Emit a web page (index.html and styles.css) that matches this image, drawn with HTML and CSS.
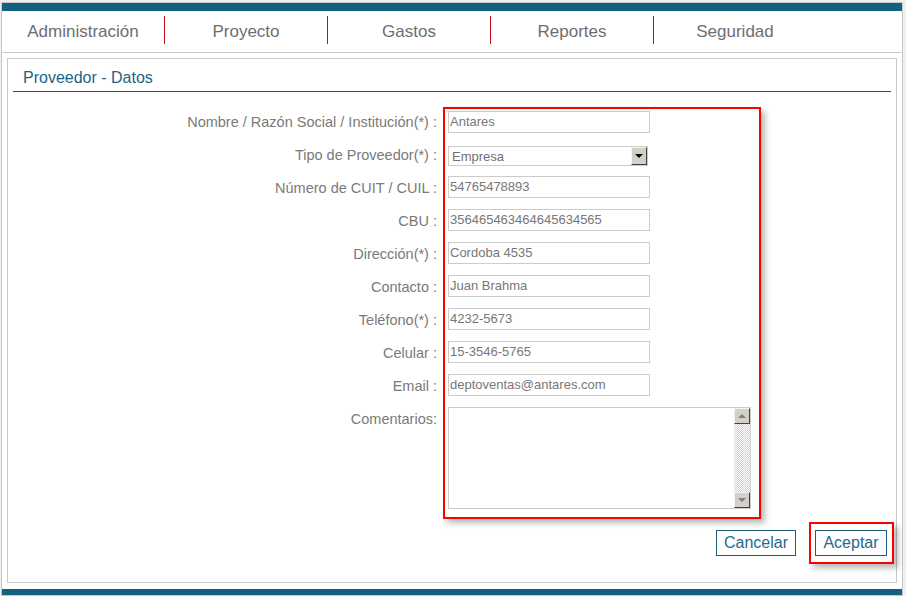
FILE: index.html
```html
<!DOCTYPE html>
<html lang="es">
<head>
<meta charset="utf-8">
<title>Proveedor - Datos</title>
<link rel="stylesheet" href="styles.css">
</head>
<body>
<div class="page">
  <div class="topbar"></div>
  <nav class="nav">
    <div class="tab sep">Administración</div>
    <div class="tab sep">Proyecto</div>
    <div class="tab sep">Gastos</div>
    <div class="tab sep">Reportes</div>
    <div class="tab">Seguridad</div>
  </nav>
  <div class="panel">
    <div class="panel-title">Proveedor - Datos</div>
    <div class="form">
      <div class="labels">
        <div class="lbl">Nombre / Razón Social / Institución(*) :</div>
        <div class="lbl">Tipo de Proveedor(*) :</div>
        <div class="lbl">Número de CUIT / CUIL :</div>
        <div class="lbl">CBU :</div>
        <div class="lbl">Dirección(*) :</div>
        <div class="lbl">Contacto :</div>
        <div class="lbl">Teléfono(*) :</div>
        <div class="lbl">Celular :</div>
        <div class="lbl">Email :</div>
        <div class="lbl lbl-top">Comentarios:</div>
      </div>
      <div class="fields">
        <div class="row"><div class="input">Antares</div></div>
        <div class="row"><div class="select"><span class="select-text">Empresa</span><span class="select-btn"><span class="tri-down"></span></span></div></div>
        <div class="row"><div class="input">54765478893</div></div>
        <div class="row"><div class="input">356465463464645634565</div></div>
        <div class="row"><div class="input">Cordoba 4535</div></div>
        <div class="row"><div class="input">Juan Brahma</div></div>
        <div class="row"><div class="input">4232-5673</div></div>
        <div class="row"><div class="input">15-3546-5765</div></div>
        <div class="row"><div class="input">deptoventas@antares.com</div></div>
        <div class="row-ta">
          <div class="textarea">
            <div class="ta-body"></div>
            <div class="scrollbar">
              <div class="sb-btn"><span class="tri-up"></span></div>
              <div class="sb-track"></div>
              <div class="sb-btn"><span class="tri-down gray"></span></div>
            </div>
          </div>
        </div>
      </div>
    </div>
    <div class="actions">
      <button class="btn">Cancelar</button>
      <div class="btn-highlight"><button class="btn btn-ok">Aceptar</button></div>
    </div>
  </div>
  <div class="bottombar"></div>
</div>
</body>
</html>
```
FILE: styles.css
```css
html { background: #efefef; }
body {
  margin: 0;
  font-family: "Liberation Sans", Arial, sans-serif;
}
.page {
  margin: 2px 0 0 1px;
  width: 900px;
  border: 1px solid #c8c8c8;
  background: #fff;
}
.topbar { height: 8px; background: #13617f; }
.nav {
  display: flex;
  height: 41px;
  border-bottom: 1px solid #cccccc;
}
.tab {
  width: 162px;
  height: 28px;
  margin-top: 5px;
  line-height: 32px;
  text-align: center;
  font-size: 17px;
  color: #6e6e6e;
}
.tab.sep { border-right: 1px solid #c0101a; }
.panel {
  box-sizing: border-box;
  height: 525px;
  margin: 5px 5px 6px 5px;
  border: 1px solid #c8c8c8;
  padding: 0 5px;
}
.panel-title {
  height: 33px;
  box-sizing: border-box;
  padding: 10px 0 0 10px;
  line-height: 18px;
  font-size: 16px;
  color: #1c6485;
  border-bottom: 1px solid #c0101a;
}
.form {
  display: flex;
  align-items: flex-start;
  margin-top: 14px;
}
.labels {
  width: 424px;
  display: flex;
  flex-direction: column;
}
.lbl {
  height: 33px;
  line-height: 33px;
  text-align: right;
  font-size: 14.5px;
  color: #7a7a7a;
  white-space: nowrap;
}
.lbl-top {
  height: auto;
  line-height: 16px;
  padding-top: 8px;
}
.fields {
  width: 311px;
  margin: 1px 0 0 6px;
  border: 2px solid #ff0000;
  padding: 0 0 8px 3px;
  box-sizing: content-box;
  box-shadow: 4px 4px 6px rgba(0, 0, 0, 0.28);
  display: flex;
  flex-direction: column;
}
.fields .row {
  height: 33px;
  display: flex;
  align-items: flex-start;
}
.input {
  box-sizing: border-box;
  width: 202px;
  height: 22px;
  margin-top: 1px;
  border: 1px solid #cccccc;
  padding: 0 1px;
  font-size: 13px;
  line-height: 19px;
  color: #777777;
  white-space: nowrap;
  overflow: hidden;
}
.fields .row:first-child .input { margin-top: 2px; }
.select {
  box-sizing: border-box;
  width: 200px;
  height: 20px;
  margin-top: 4px;
  border: 1px solid #cccccc;
  display: flex;
}
.select-text {
  flex: 1;
  padding-left: 3px;
  font-size: 13px;
  line-height: 19px;
  color: #707070;
}
.select-btn {
  box-sizing: border-box;
  width: 16px;
  height: 18px;
  background: #d4d0c8;
  border: 1px solid;
  border-color: #f4f4f4 #404040 #404040 #f4f4f4;
  display: flex;
  align-items: center;
  justify-content: center;
}
.tri-down {
  width: 0;
  height: 0;
  border-left: 4px solid transparent;
  border-right: 4px solid transparent;
  border-top: 4px solid #000;
}
.tri-down.gray { border-top-color: #808080; }
.tri-up {
  width: 0;
  height: 0;
  border-left: 4px solid transparent;
  border-right: 4px solid transparent;
  border-bottom: 4px solid #808080;
}
.row-ta { padding-top: 1px; }
.textarea {
  box-sizing: border-box;
  width: 303px;
  height: 102px;
  border: 1px solid #cccccc;
  display: flex;
}
.ta-body { flex: 1; }
.scrollbar {
  width: 16px;
  display: flex;
  flex-direction: column;
}
.sb-btn {
  box-sizing: border-box;
  height: 16px;
  background: #d4d0c8;
  border: 1px solid;
  border-color: #f4f4f4 #404040 #404040 #f4f4f4;
  display: flex;
  align-items: center;
  justify-content: center;
}
.sb-track {
  flex: 1;
  background: repeating-conic-gradient(#d4d0c8 0 25%, #ffffff 0 50%) 0 0 / 2px 2px;
}
.actions {
  display: flex;
  justify-content: flex-end;
  align-items: center;
  margin-top: 3px;
}
.btn {
  box-sizing: border-box;
  height: 26px;
  padding: 0 7px;
  background: #fff;
  border: 1px solid #1d5f79;
  font-family: "Liberation Sans", Arial, sans-serif;
  font-size: 16px;
  color: #1f6a8c;
  line-height: 22px;
}
.btn-highlight {
  margin: 0 -3px 0 13px;
  border: 2px solid #ff0000;
  padding: 6px 5px 6px 4px;
  box-shadow: 4px 4px 6px rgba(0, 0, 0, 0.28);
  display: flex;
}
.btn-ok { width: 72px; padding: 0; }
.bottombar { height: 6px; background: #13617f; }
```
